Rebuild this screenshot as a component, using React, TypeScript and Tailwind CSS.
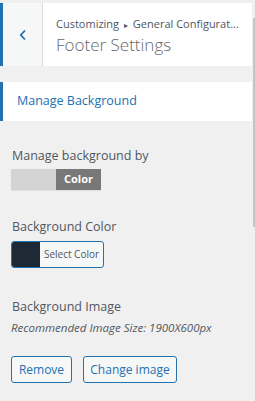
const font = { fontFamily: '"Open Sans", "Noto Sans", sans-serif' };

function BackButton() {
  return (
    <button className="flex h-full w-[43px] shrink-0 items-center justify-center border-l-[3px] border-r border-l-[#2271b1] border-r-[#dcdcde] bg-[#f6f7f7]">
      <svg width="10" height="14" viewBox="0 0 10 14" fill="none">
        <path d="M7 2.5 L2.8 7 L7 11.5" stroke="#2271b1" strokeWidth="1.8" />
      </svg>
    </button>
  );
}

export default function App() {
  return (
    <div className="relative flex h-[401px] w-[255px] overflow-hidden bg-[#f0f0f1]" style={font}>
      <div className="flex w-[252px] shrink-0 flex-col pt-[3px]">
        <header className="flex h-[63px] bg-white">
          <BackButton />
          <div className="min-w-0 flex-1 pl-[13px] pt-[12px]">
            <p className="whitespace-nowrap text-[11px] leading-[17px] text-[#50575e]">
              Customizing <span className="mx-[2px] text-[8px]">▸</span> General Configurat...
            </p>
            <h3 className="text-[17px] font-light leading-[24px] text-[#646970]">Footer Settings</h3>
          </div>
        </header>

        <div className="mt-[16px] flex h-[39px] items-center border-l-[3px] border-[#2271b1] bg-white pl-[14px]">
          <span className="text-[12.5px] text-[#2271b1]">Manage Background</span>
        </div>

        <div className="px-[11px] pt-[26px]">
          <p className="pl-px text-[12.5px] font-medium leading-[18px] text-[#50575e]">Manage background by</p>
          <div className="mt-[4px] flex h-[22px] w-[90px] border-b border-[#e0e0e0]">
            <div className="flex-1 bg-[#d4d4d4]" />
            <div className="flex flex-1 items-center justify-center bg-[#787878] text-[11px] font-bold text-white">Color</div>
          </div>

          <p className="mt-[27px] pl-px text-[12.5px] font-medium leading-[18px] text-[#50575e]">Background Color</p>
          <button className="mt-[5px] flex h-[27px] w-[93px] overflow-hidden rounded-[3px] border border-[#2271b1] bg-[#f6f7f7]">
            <span className="h-full w-[28px] bg-[#1d2a36]" />
            <span className="flex flex-1 items-center justify-center text-[10px] text-[#50575e]">Select Color</span>
          </button>

          <p className="mt-[30px] pl-px text-[12.5px] font-medium leading-[18px] text-[#50575e]">Background Image</p>
          <p className="mt-[4px] text-[11.5px] italic leading-[16px] text-[#50575e]">Recommended Image Size: 1900X600px</p>

          <div className="mt-[20px] flex gap-[11px]">
            <button className="h-[27px] w-[61px] rounded-[3px] border border-[#2271b1] bg-[#f6f7f7] text-[12px] text-[#2271b1]">Remove</button>
            <button className="h-[27px] w-[94px] rounded-[3px] border border-[#2271b1] bg-[#f6f7f7] text-[12px] text-[#2271b1]">Change image</button>
          </div>
        </div>
      </div>

      <div className="flex w-[3px] flex-col pt-[18px]">
        <div className="ml-[1px] h-[209px] w-[2px] bg-[#c3c4c7]" />
      </div>
    </div>
  );
}
